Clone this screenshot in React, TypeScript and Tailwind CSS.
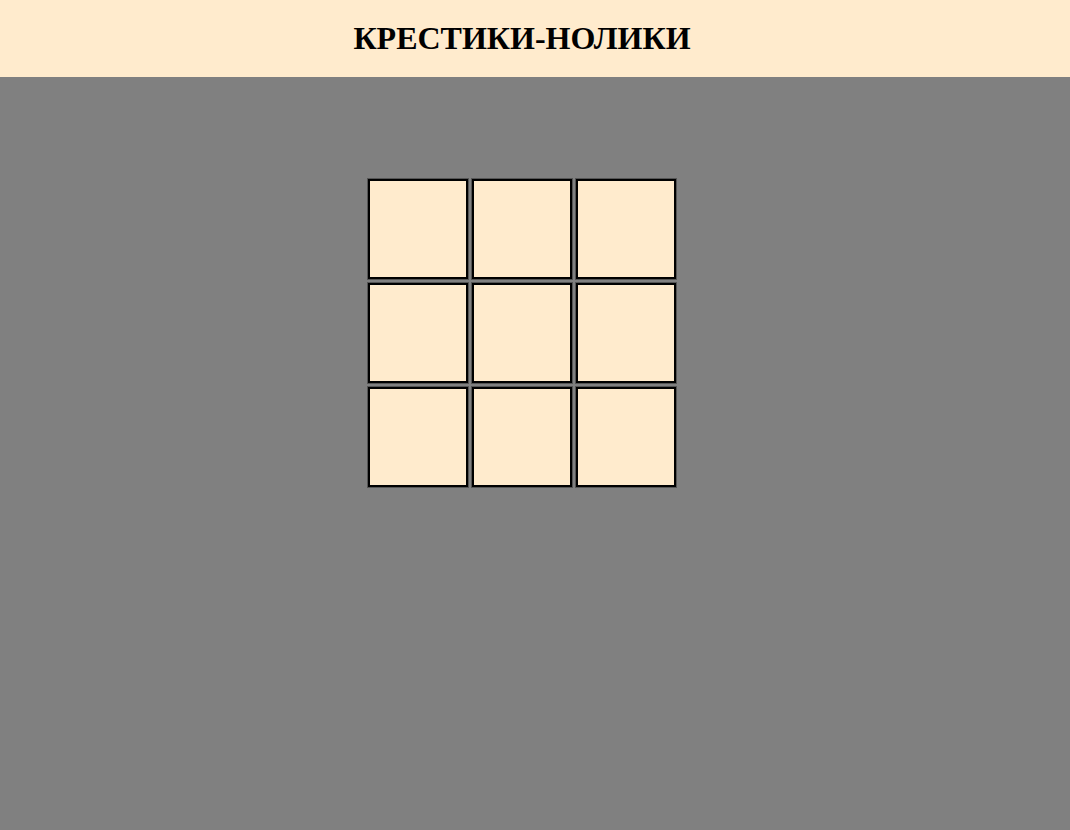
import React from "react";

export default function App() {
  const cells = Array.from({ length: 9 });
  return (
    <div className="min-h-[830px] w-full bg-[#808080]" style={{ fontFamily: '"Liberation Serif", "Times New Roman", serif' }}>
      <header className="h-[77px] w-full bg-[#ffebcd]">
        <div className="w-[1044px] h-full flex items-center justify-center">
          <h1 className="text-[32px] font-bold leading-[37px] text-black">КРЕСТИКИ-НОЛИКИ</h1>
        </div>
      </header>
      <main className="w-[1044px] flex justify-center pt-[102px]">
        <div className="grid grid-cols-[100px_100px_100px] gap-[4px]">
          {cells.map((_, i) => (
            <div
              key={i}
              className="w-[100px] h-[100px] bg-[#ffebcd] border-2 border-black shadow-[0_0_0_1px_#555]"
            />
          ))}
        </div>
      </main>
    </div>
  );
}
